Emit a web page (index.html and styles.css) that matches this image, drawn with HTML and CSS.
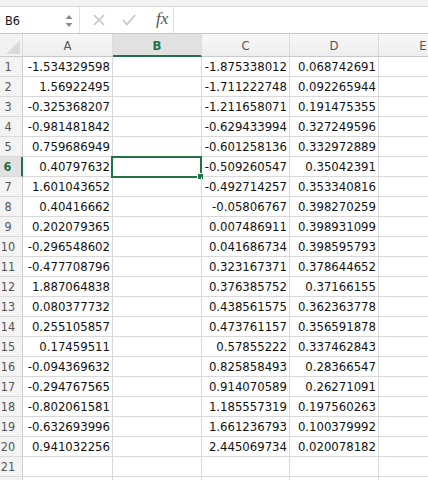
FILE: index.html
```html
<!DOCTYPE html>
<html lang="en">
<head>
    <meta charset="UTF-8">
    <meta name="viewport" content="width=device-width, initial-scale=1.0">
    <title>Sheet1</title>
    <link rel="stylesheet" href="styles.css">
</head>
<body>
    <div class="ribbon-edge"></div>
    <div class="formula-bar">
        <div class="name-box">
            <span class="name-value">B6</span>
            <span class="spinner">
                <svg width="8" height="14" viewBox="0 0 8 14">
                    <path d="M4 1 L7.5 5 L0.5 5 Z" fill="#8a8a8a"/>
                    <path d="M4 13 L7.5 9 L0.5 9 Z" fill="#8a8a8a"/>
                </svg>
            </span>
        </div>
        <div class="bar-buttons">
            <svg class="btn-icon" width="12" height="12" viewBox="0 0 12 12">
                <path d="M1 1 L11 11 M11 1 L1 11" stroke="#c4c4c4" stroke-width="1.6" fill="none"/>
            </svg>
            <svg class="btn-icon" width="14" height="12" viewBox="0 0 14 12">
                <path d="M1 6 L5 10.5 L13 1" stroke="#c4c4c4" stroke-width="1.6" fill="none"/>
            </svg>
            <span class="fx">fx</span>
        </div>
        <div class="formula-input"></div>
    </div>

    <div class="grid-wrap">
        <table class="grid" id="grid">
            <colgroup>
                <col class="c-head">
                <col class="c-a">
                <col class="c-b">
                <col class="c-c">
                <col class="c-d">
                <col class="c-e">
            </colgroup>
            <thead>
                <tr>
                    <th class="corner"><span class="corner-tri"></span></th>
                    <th>A</th>
                    <th class="sel-col">B</th>
                    <th>C</th>
                    <th>D</th>
                    <th>E</th>
                </tr>
            </thead>
            <tbody id="rows"></tbody>
        </table>
    </div>

    <script>
        var datos = [
            ['-1.534329598', '-1.875338012', '0.068742691'],
            ['1.56922495', '-1.711222748', '0.092265944'],
            ['-0.325368207', '-1.211658071', '0.191475355'],
            ['-0.981481842', '-0.629433994', '0.327249596'],
            ['0.759686949', '-0.601258136', '0.332972889'],
            ['0.40797632', '-0.509260547', '0.35042391'],
            ['1.601043652', '-0.492714257', '0.353340816'],
            ['0.40416662', '-0.05806767', '0.398270259'],
            ['0.202079365', '0.007486911', '0.398931099'],
            ['-0.296548602', '0.041686734', '0.398595793'],
            ['-0.477708796', '0.323167371', '0.378644652'],
            ['1.887064838', '0.376385752', '0.37166155'],
            ['0.080377732', '0.438561575', '0.362363778'],
            ['0.255105857', '0.473761157', '0.356591878'],
            ['0.17459511', '0.57855222', '0.337462843'],
            ['-0.094369632', '0.825858493', '0.28366547'],
            ['-0.294767565', '0.914070589', '0.26271091'],
            ['-0.802061581', '1.185557319', '0.197560263'],
            ['-0.632693996', '1.661236793', '0.100379992'],
            ['0.941032256', '2.445069734', '0.020078182']
        ];

        var cuerpo = document.getElementById('rows');
        // la fila 22 apenas asoma por abajo, sin número visible
        for (var i = 0; i < 22; i++) {
            var fila = datos[i] || ['', '', ''];
            var tr = document.createElement('tr');
            var num = i + 1;
            var etiqueta = num <= 21 ? num : '';
            var html = '<th class="row-head' + (num === 6 ? ' sel-row' : '') + '">' + etiqueta + '</th>';
            html += '<td>' + fila[0] + '</td>';
            html += '<td class="b-cell">' + (num === 6 ? '<div class="selection"><span class="handle"></span></div>' : '') + '</td>';
            html += '<td>' + fila[1] + '</td>';
            html += '<td>' + fila[2] + '</td>';
            html += '<td></td>';
            tr.innerHTML = html;
            cuerpo.appendChild(tr);
        }
    </script>
</body>
</html>
```

FILE: styles.css
```css
body {
    margin: 0;
    background: #ffffff;
    font-family: "DejaVu Sans Condensed", "DejaVu Sans", sans-serif;
    overflow: hidden;
}
.ribbon-edge {
    height: 6px;
    background: #f2f2f2;
    border-bottom: 1px solid #d6d6d6;
}
.formula-bar {
    display: flex;
    height: 26px;
    background: #ffffff;
    border-bottom: 1px solid #c6c6c6;
}
.name-box {
    width: 80px;
    display: flex;
    align-items: center;
    justify-content: space-between;
    padding: 0 6px 0 5px;
    box-sizing: border-box;
    border-right: 1px solid #e0e0e0;
}
.name-value {
    font-size: 12.5px;
    color: #111;
}
.spinner {
    display: flex;
    margin-top: 1px;
}
.bar-buttons {
    width: 94px;
    display: flex;
    align-items: center;
    padding-left: 13px;
    box-sizing: border-box;
    border-right: 1px solid #e0e0e0;
}
.btn-icon {
    margin-right: 17px;
}
.btn-icon + .btn-icon {
    margin-right: 20px;
}
.fx {
    font-family: "Liberation Serif", serif;
    font-style: italic;
    font-size: 17px;
    color: #555;
    margin-top: -2px;
}
.formula-input {
    flex: 1;
}
.grid-wrap {
    overflow: hidden;
    width: 428px;
}
.grid {
    border-collapse: separate;
    border-spacing: 0;
    table-layout: fixed;
    width: 468px;
}
.c-head { width: 23px; }
.c-a { width: 90px; }
.c-b { width: 89px; }
.c-c { width: 88px; }
.c-d { width: 89px; }
.c-e { width: 89px; }
.grid th,
.grid td {
    box-sizing: border-box;
    border-right: 1px solid #d9d9d9;
    border-bottom: 1px solid #d9d9d9;
    padding: 0;
    white-space: nowrap;
    overflow: visible;
}
.grid thead th {
    height: 23px;
    background: linear-gradient(#f7f7f7, #eeeeee);
    border-right-color: #dcdcdc;
    border-bottom: 1px solid #c9c9c9;
    font-weight: normal;
    font-size: 13px;
    color: #555;
    text-align: center;
    padding-top: 1px;
}
.grid thead th.sel-col {
    background: #e1e1e1;
    color: #217346;
    font-weight: bold;
    border-bottom: 2px solid #217346;
}
.grid th.corner {
    position: relative;
    background: #f2f2f2;
}
.corner-tri {
    position: absolute;
    right: 2px;
    bottom: 2px;
    width: 0;
    height: 0;
    border-left: 14px solid transparent;
    border-bottom: 14px solid #dadada;
}
.grid td {
    height: 20px;
    font-size: 13px;
    color: #111;
    text-align: right;
    padding-right: 2px;
    vertical-align: middle;
}
.grid th.row-head {
    height: 20px;
    background: #f3f3f3;
    font-weight: normal;
    font-size: 12.5px;
    color: #555;
    text-align: center;
    padding-right: 6px;
    border-right-color: #cfcfcf;
}
.grid th.row-head.sel-row {
    background: #e1e1e1;
    color: #217346;
    font-weight: bold;
    border-right: 2px solid #217346;
}
.b-cell {
    position: relative;
}
.selection {
    position: absolute;
    top: -1px;
    left: -2px;
    right: -1px;
    bottom: -2px;
    border: 2px solid #217346;
}
.handle {
    position: absolute;
    right: -4px;
    bottom: -4px;
    width: 5px;
    height: 5px;
    background: #217346;
    border: 1px solid #ffffff;
}
```
